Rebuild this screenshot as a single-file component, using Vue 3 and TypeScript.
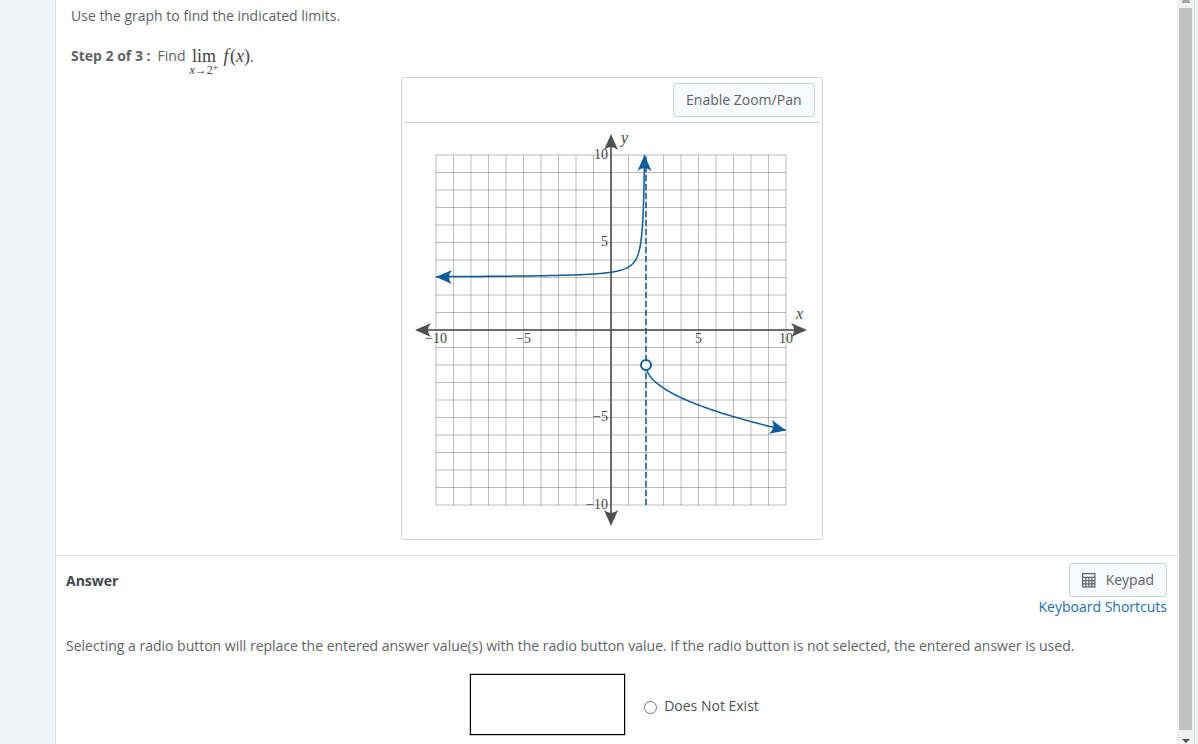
<script setup lang="ts">
import { ref } from 'vue'

const UNIT = 17.5
const OX = 207
const OY = 207

const px = (x: number): number => OX + x * UNIT
const py = (y: number): number => OY - y * UNIT

const gridTicks: number[] = Array.from({ length: 21 }, (_, i) => i - 10)

function trace(f: (t: number) => [number, number], steps: number): string {
  const points: string[] = []
  for (let i = 0; i <= steps; i++) {
    const [x, y] = f(i / steps)
    points.push(`${px(x).toFixed(2)},${py(y).toFixed(2)}`)
  }
  return points.join(' ')
}

// Left branch: y = 3 + 0.6 / (2 - x), sampled evenly in log distance to x = 2
const leftBranch = trace((t) => {
  const d = 12 * Math.pow(0.6 / 7 / 12, t)
  return [2 - d, 3 + 0.6 / d]
}, 160)

// Right branch: y = -2 - 1.32 * sqrt(x - 2)
const rightBranch = trace((t) => [2 + 8 * t * t, -2 - 1.32 * Math.sqrt(8) * t], 80)

const xLabels = [
  { value: '−10', at: -10 },
  { value: '−5', at: -5 },
  { value: '5', at: 5 },
  { value: '10', at: 10 },
]
const yLabels = [
  { value: '10', at: 10 },
  { value: '5', at: 5 },
  { value: '−5', at: -5 },
  { value: '−10', at: -10 },
]

const ARROW = 'M0 0L-16 -7Q-10 0 -16 7Z'

const answer = ref('')
const choice = ref('')
</script>

<template>
  <div class="page">
    <main class="sheet">
      <section class="question">
        <p class="prompt">Use the graph to find the indicated limits.</p>
        <div class="step">
          <strong>Step 2 of 3 :</strong>
          <span class="find">Find</span>
          <span class="limit">
            <span class="lim">lim</span>
            <span class="under"><i>x</i>→2<sup>+</sup></span>
          </span>
          <span class="fx"><i>f</i>&hairsp;(<i>x</i>)<span class="stop">.</span></span>
        </div>

        <div class="graph-card">
          <div class="toolbar">
            <button type="button" class="btn">Enable Zoom/Pan</button>
          </div>
          <svg class="graph" width="416" height="414" viewBox="0 0 416 414" role="img" aria-label="Graph of f">
            <g class="grid">
              <line v-for="t in gridTicks" :key="'v' + t" :x1="px(t)" :x2="px(t)" :y1="py(10)" :y2="py(-10)" />
              <line v-for="t in gridTicks" :key="'h' + t" :x1="px(-10)" :x2="px(10)" :y1="py(t)" :y2="py(t)" />
            </g>
            <g class="axis">
              <line x1="24" x2="390" :y1="OY" :y2="OY" />
              <line :x1="OX" :x2="OX" y1="24" y2="390" />
            </g>
            <g class="axis-head">
              <path :d="ARROW" transform="translate(403 207)" />
              <path :d="ARROW" transform="translate(11 207) rotate(180)" />
              <path :d="ARROW" transform="translate(207 11) rotate(-90)" />
              <path :d="ARROW" transform="translate(207 403) rotate(90)" />
            </g>
            <line class="asymptote" :x1="px(2)" :x2="px(2)" :y1="py(10)" :y2="py(-10)" />
            <polyline class="curve" :points="leftBranch" />
            <polyline class="curve" :points="rightBranch" />
            <g class="curve-head">
              <path :d="ARROW" transform="translate(32 154) rotate(180)" />
              <path :d="ARROW" transform="translate(240.5 32) rotate(-90)" />
              <path :d="ARROW" transform="translate(382 307.5) rotate(13)" />
            </g>
            <circle class="hole" :cx="px(2)" :cy="py(-2)" r="5" />
            <g class="ticks">
              <text v-for="l in xLabels" :key="'x' + l.at" :x="px(l.at)" y="220" text-anchor="middle">{{ l.value }}</text>
              <text v-for="l in yLabels" :key="'y' + l.at" x="204" :y="Math.floor(py(l.at)) + 4" text-anchor="end">{{ l.value }}</text>
            </g>
            <text class="name" x="392" y="196">x</text>
            <text class="name" x="217" y="20">y</text>
          </svg>
        </div>
      </section>

      <section class="answer">
        <header class="answer-head">
          <h2>Answer</h2>
          <div class="tools">
            <button type="button" class="btn keypad">
              <svg width="14" height="15" viewBox="0 0 14 15" aria-hidden="true">
                <path d="M.6.6h12.3v13.3H.6zM.6 4.4h12.3M.6 7.6h12.3M.6 10.8h12.3M3.7 4.4v9.5M6.8 4.4v9.5M9.9 4.4v9.5" />
              </svg>
              Keypad
            </button>
            <a href="#shortcuts">Keyboard Shortcuts</a>
          </div>
        </header>
        <p class="note">
          Selecting a radio button will replace the entered answer value(s) with the radio button value. If the radio
          button is not selected, the entered answer is used.
        </p>
        <div class="entry">
          <input v-model="answer" class="box" type="text" aria-label="Answer value" />
          <label class="option">
            <input v-model="choice" type="radio" name="choice" value="dne" />
            Does Not Exist
          </label>
        </div>
      </section>
    </main>
    <div class="scrollbar" aria-hidden="true">
      <svg width="8" height="3" viewBox="0 0 8 3"><path d="M0 3V2L1 0H7L8 2V3Z" fill="#a3a3a3" /></svg>
      <div class="thumb"></div>
      <svg width="8" height="5" viewBox="0 0 8 5"><path d="M0 0H8L4 4Z" fill="#505050" /></svg>
    </div>
  </div>
</template>

<style>
body {
  margin: 0;
  overflow: hidden;
}
</style>

<style scoped>
.page {
  box-sizing: border-box;
  display: flex;
  height: 100vh;
  overflow: hidden;
  padding: 0 3px 0 55px;
  background: #f0f4f8;
  color: #5f6368;
  font: 14px/20px "Open Sans", sans-serif;
}

.sheet {
  flex: 1;
  min-width: 0;
  background: #fff;
  border-left: 1px solid #dcdfe2;
}

.question {
  padding: 6px 25px 15px 15px;
  border-bottom: 1px solid #dcdfe2;
}

.prompt {
  margin: 0;
}

.step {
  display: flex;
  align-items: flex-start;
  height: 31px;
  margin-top: 20px;
}

.find {
  margin-left: 7px;
}

.limit {
  display: flex;
  flex-direction: column;
  align-items: center;
  margin-left: 4px;
  color: #444;
  font-family: "Liberation Serif", serif;
}

.lim {
  font-size: 18px;
  line-height: 20px;
}

.under {
  font-size: 12px;
  line-height: 8px;
}

.under sup {
  font-size: 10px;
  line-height: 0;
  vertical-align: 3px;
}

.fx {
  margin-left: 5px;
  color: #444;
  font-family: "Liberation Serif", serif;
  font-size: 18px;
}

.stop {
  font-family: "Open Sans", sans-serif;
  font-size: 14px;
}

.graph-card {
  box-sizing: border-box;
  width: 422px;
  margin: 0 auto;
  padding: 2px;
  border: 1px solid #ccd3da;
  border-radius: 3px;
}

.toolbar {
  display: flex;
  justify-content: flex-end;
  padding: 3px 5px 5px;
  border-bottom: 1px solid #ccd3da;
}

.graph {
  display: block;
}

.btn {
  height: 34px;
  padding: 0 12px;
  border: 1px solid #c5d3da;
  border-radius: 3px;
  background: #f7f9fc;
  color: #5f6368;
  font: inherit;
}

.grid line {
  stroke: #000;
  stroke-opacity: 0.26;
  stroke-width: 1;
}

.axis line {
  stroke: #505050;
  stroke-opacity: 0.8;
  stroke-width: 2;
}

.axis-head {
  fill: #505050;
}

.asymptote {
  stroke: #0b5c9c;
  stroke-opacity: 0.75;
  stroke-width: 2;
  stroke-dasharray: 6 3;
  stroke-dashoffset: 7;
}

.curve {
  fill: none;
  stroke: #0b5c9c;
  stroke-width: 1.5;
}

.curve-head {
  fill: #0b5c9c;
}

.hole {
  fill: #fff;
  stroke: #0b5c9c;
  stroke-width: 2;
}

.ticks {
  fill: #444;
  font: 14px "Liberation Serif", serif;
}

.name {
  fill: #444;
  font: italic 16px "Liberation Serif", serif;
}

.answer {
  padding: 7px 10px 8px;
}

.answer-head {
  display: flex;
  justify-content: space-between;
  align-items: flex-start;
}

h2 {
  margin: 8px 0 0;
  color: #43474c;
  font-size: 14px;
  line-height: 20px;
}

.tools {
  display: flex;
  flex-direction: column;
  align-items: flex-end;
}

.keypad {
  display: flex;
  align-items: center;
  gap: 10px;
}

.keypad path {
  fill: none;
  stroke: #5f6368;
  stroke-width: 1.2;
}

.tools a {
  color: #1b6fae;
  text-decoration: none;
}

.note {
  margin: 19px 0 18px;
}

.entry {
  display: flex;
  justify-content: center;
  align-items: center;
  gap: 19px;
  padding-right: 4px;
}

.box {
  box-sizing: border-box;
  width: 155px;
  height: 61px;
  border: 1px solid #000;
  outline: 1px solid #ccc;
  background: #fff;
}

.option {
  display: flex;
  align-items: center;
  gap: 7px;
  margin-top: 3px;
  color: #4d5156;
}

.option input {
  width: 13px;
  height: 13px;
  margin: 2px 0 0;
}

.scrollbar {
  box-sizing: border-box;
  display: flex;
  flex-direction: column;
  align-items: center;
  justify-content: space-between;
  flex: none;
  width: 18px;
  border-right: 1px solid #dcdfe2;
  background: #f1f1f1;
}

.thumb {
  flex: 1;
  width: 13px;
  margin: 5px 0 9px;
  background: #c1c1c1;
}
</style>
